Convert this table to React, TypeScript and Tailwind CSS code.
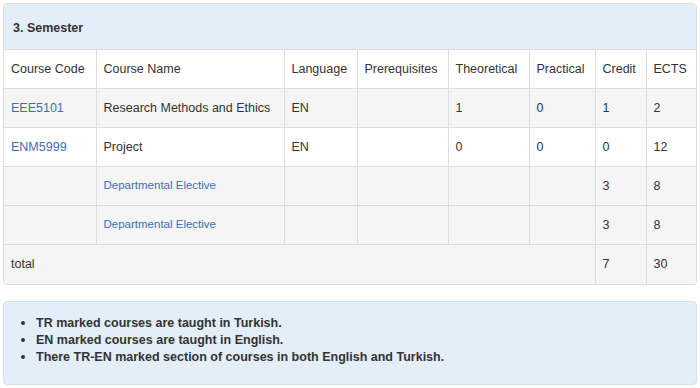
const COLUMNS = [
  { label: 'Course Code', width: 'w-[92px]' },
  { label: 'Course Name', width: 'w-[188px]' },
  { label: 'Language', width: 'w-[73px]' },
  { label: 'Prerequisites', width: 'w-[91px]' },
  { label: 'Theoretical', width: 'w-[81px]' },
  { label: 'Practical', width: 'w-[66px]' },
  { label: 'Credit', width: 'w-[51px]' },
  { label: 'ECTS', width: 'w-[52px]' },
];

interface Course {
  code?: string;
  name: string;
  elective?: boolean;
  language?: string;
  theoretical?: string;
  practical?: string;
  credit: string;
  ects: string;
  shaded: boolean;
}

const COURSES: Course[] = [
  { code: 'EEE5101', name: 'Research Methods and Ethics', language: 'EN', theoretical: '1', practical: '0', credit: '1', ects: '2', shaded: true },
  { code: 'ENM5999', name: 'Project', language: 'EN', theoretical: '0', practical: '0', credit: '0', ects: '12', shaded: false },
  { name: 'Departmental Elective', elective: true, credit: '3', ects: '8', shaded: true },
  { name: 'Departmental Elective', elective: true, credit: '3', ects: '8', shaded: true },
];

const cell = 'h-[39px] px-[7px] align-middle whitespace-nowrap border-l border-t border-[#dddddd] first:border-l-0';

export default function App() {
  return (
    <div className="w-[700px] h-[388px] bg-white pt-[3px] px-[3px] font-['Liberation_Sans',Arial,sans-serif] text-[12.5px] text-[#333333]">
      <section className="w-[694px] border border-[#dddddd] rounded-[4px] overflow-hidden">
        <div className="h-[45px] bg-[#e3eef9] flex items-center px-[9px] pt-[3px]">
          <h3 className="font-bold text-[12.5px]">3. Semester</h3>
        </div>
        <table className="w-full table-fixed border-collapse">
          <colgroup>
            {COLUMNS.map((c) => (
              <col key={c.label} className={c.width} />
            ))}
          </colgroup>
          <thead>
            <tr className="bg-white">
              {COLUMNS.map((c) => (
                <th key={c.label} className={`${cell} font-normal text-left`}>
                  {c.label}
                </th>
              ))}
            </tr>
          </thead>
          <tbody>
            {COURSES.map((c, i) => (
              <tr key={i} className={c.shaded ? 'bg-[#f5f5f5]' : 'bg-white'}>
                <td className={`${cell} text-[#3d6db4]`}>{c.code}</td>
                <td className={`${cell} ${c.elective ? 'text-[#3d6db4] text-[11.5px]' : ''}`}>{c.name}</td>
                <td className={cell}>{c.language}</td>
                <td className={cell}></td>
                <td className={cell}>{c.theoretical}</td>
                <td className={cell}>{c.practical}</td>
                <td className={cell}>{c.credit}</td>
                <td className={cell}>{c.ects}</td>
              </tr>
            ))}
            <tr className="bg-[#f5f5f5]">
              <td colSpan={6} className={`${cell} h-[38px]`}>total</td>
              <td className={`${cell} h-[38px]`}>7</td>
              <td className={`${cell} h-[38px]`}>30</td>
            </tr>
          </tbody>
        </table>
      </section>

      <section className="mt-[16px] w-[694px] h-[84px] bg-[#e3eef9] border border-[#d3e1ee] rounded-[4px] pl-[17px] pt-[13px]">
        <ul className="font-bold leading-[17px]">
          {[
            'TR marked courses are taught in Turkish.',
            'EN marked courses are taught in English.',
            'There TR-EN marked section of courses in both English and Turkish.',
          ].map((t) => (
            <li key={t} className="flex items-center gap-[11px]">
              <span className="w-[4px] h-[4px] bg-[#333333] rounded-full shrink-0" />
              {t}
            </li>
          ))}
        </ul>
      </section>
    </div>
  );
}
